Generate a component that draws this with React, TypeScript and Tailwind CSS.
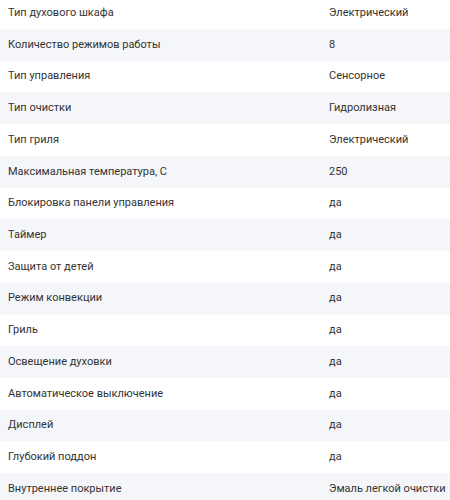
const specs: [string, string][] = [
  ['Тип духового шкафа', 'Электрический'],
  ['Количество режимов работы', '8'],
  ['Тип управления', 'Сенсорное'],
  ['Тип очистки', 'Гидролизная'],
  ['Тип гриля', 'Электрический'],
  ['Максимальная температура, С', '250'],
  ['Блокировка панели управления', 'да'],
  ['Таймер', 'да'],
  ['Защита от детей', 'да'],
  ['Режим конвекции', 'да'],
  ['Гриль', 'да'],
  ['Освещение духовки', 'да'],
  ['Автоматическое выключение', 'да'],
  ['Дисплей', 'да'],
  ['Глубокий поддон', 'да'],
  ['Внутреннее покрытие', 'Эмаль легкой очистки'],
]

export default function App() {
  return (
    <div className="w-[450px] h-[500px] overflow-hidden bg-white font-['Roboto',sans-serif] text-[11px] text-[#333]">
      <div className="-mt-[2.7px]">
        {specs.map(([label, value], i) => (
          <div
            key={label}
            className={`flex items-center h-[31.72px] whitespace-nowrap ${i % 2 === 1 ? 'bg-[#f5f6f9]' : 'bg-white'}`}
          >
            <div className="w-[329px] pl-2">{label}</div>
            <div className="flex-1">{value}</div>
          </div>
        ))}
      </div>
    </div>
  )
}
